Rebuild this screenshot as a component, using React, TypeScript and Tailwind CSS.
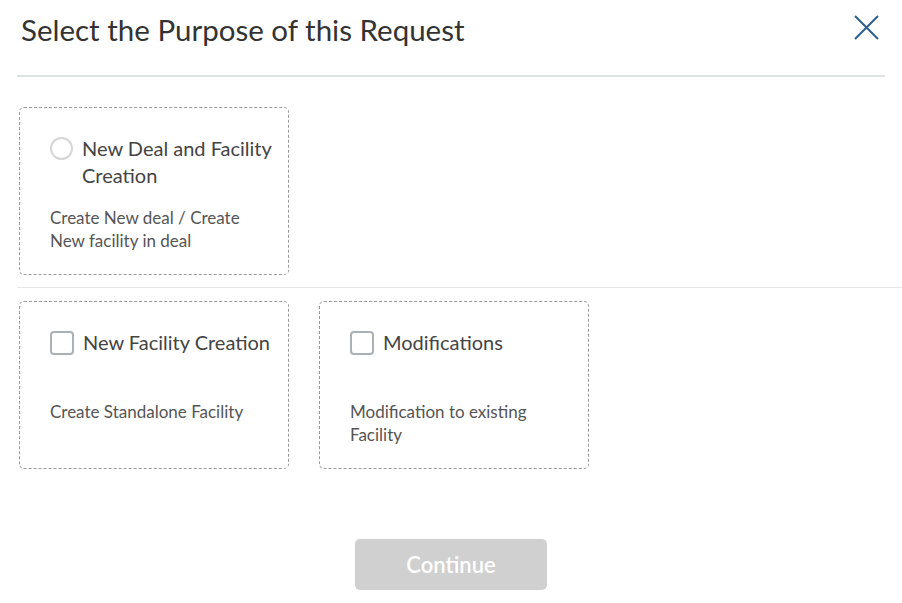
import React from "react";

const font = { fontFamily: "Lato, 'Open Sans', 'Liberation Sans', sans-serif" };

function Radio() {
  return (
    <span className="mt-[2px] block h-[23px] w-[23px] shrink-0 rounded-full border-2 border-[#d6d6d6] bg-white" />
  );
}

function Check() {
  return (
    <span className="mt-[2px] block h-[24px] w-[24px] shrink-0 rounded-[4px] border-2 border-[#a9b0b6] bg-white" />
  );
}

function Card({
  kind,
  label,
  desc,
}: {
  kind: "radio" | "check";
  label: string;
  desc: string;
}) {
  return (
    <div className="flex h-[168px] w-[270px] flex-col rounded-[5px] border border-dashed border-[#9a9a9a] pl-[30px] pr-[12px] pt-[27px]">
      <div className="flex h-[54px] items-start gap-[9px]">
        {kind === "radio" ? <Radio /> : <Check />}
        <span className="text-[20px] leading-[27px] text-[#444]">{label}</span>
      </div>
      <p className="mt-[17px] w-[215px] text-[17px] leading-[23px] text-[#555]">{desc}</p>
    </div>
  );
}

export default function App() {
  return (
    <div className="h-[603px] w-[902px] overflow-hidden bg-white" style={font}>
      <div className="px-[17px]">
        <div className="flex h-[75px] items-start justify-between">
          <h1 className="pl-[4px] pt-[10px] text-[29.5px] leading-[40px] text-[#333]">
            Select the Purpose of this Request
          </h1>
          <svg
            width="25"
            height="25"
            viewBox="0 0 25 25"
            className="mr-[6px] mt-[15px]"
            fill="none"
            stroke="#2c5f8e"
            strokeWidth="2"
          >
            <path d="M1 1 L24 24 M24 1 L1 24" />
          </svg>
        </div>
        <div className="h-[2px] bg-[#dfe2e3]" />
      </div>

      <div className="px-[19px] pt-[30px]">
        <Card
          kind="radio"
          label="New Deal and Facility Creation"
          desc="Create New deal / Create New facility in deal"
        />
      </div>

      <div className="ml-[17px] mt-[12px] h-px bg-[#e6e6e6]" />

      <div className="flex gap-[30px] px-[19px] pt-[13px]">
        <Card kind="check" label="New Facility Creation" desc="Create Standalone Facility" />
        <Card kind="check" label="Modifications" desc="Modification to existing Facility" />
      </div>

      <div className="flex justify-center pt-[70px]">
        <button className="h-[51px] w-[192px] rounded-[5px] bg-[#d0d0d0] text-[22px] font-semibold text-white">
          Continue
        </button>
      </div>
    </div>
  );
}
